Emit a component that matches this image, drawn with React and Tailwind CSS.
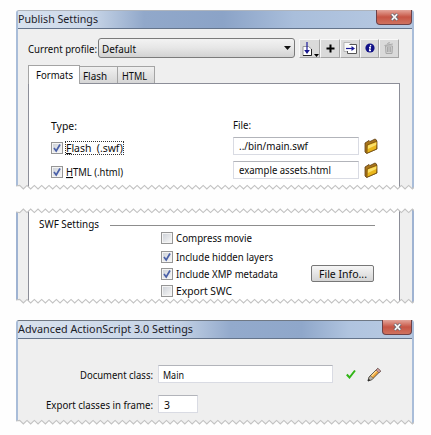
import React from "react";

const zig = (up, n = 54, p = 7.34) => {
  const pts = [];
  for (let i = 0; i <= n; i++) {
    pts.push(`${(i * p).toFixed(2)},${up ? 1 : 5}`.replace(/^0\.00,./, up ? "0,4" : "0,2"));
    pts.push(`${((i + 0.5) * p).toFixed(2)},${up ? 4.6 : 1.4}`);
  }
  return pts.join(" ");
};

// Torn edge: covers the outside of the tear in white and strokes the jagged line.
function Tear({ top }) {
  const pts = zig(top);
  return (
    <svg className={`absolute -left-[2px] h-[6px] w-[398px] ${top ? "top-0" : "bottom-0"}`} viewBox="0 0 398 6">
      <polygon points={top ? `0,-1 ${pts} 410,-1` : `0,7 ${pts} 410,7`} fill="#fefefe" />
      <polyline points={pts} fill="none" stroke="#c2c2c2" strokeWidth="1.1" />
    </svg>
  );
}

function T({ children, w, end, className = "" }) {
  return (
    <svg className={`block h-4 shrink-0 overflow-visible ${className}`} width={w} height="16">
      <text x={end ? w : 0} y="12" textAnchor={end ? "end" : "start"} textLength={w} lengthAdjust="spacingAndGlyphs" fill="currentColor">{children}</text>
    </svg>
  );
}

function Check({ on }) {
  return (
    <span className="flex size-3 shrink-0 items-center justify-center border border-[#969696] bg-[#f4f4f4]">
      <span className="flex size-2 items-center justify-center bg-linear-to-br from-[#cfd3d9] to-[#f5f5f5]">
        {on && (
          <svg className="size-2 overflow-visible" viewBox="0 0 8 8">
            <path d="M1 4 L3.2 7 L7 0.5" fill="none" stroke="#4a60a8" strokeWidth="1.7" />
          </svg>
        )}
      </span>
    </span>
  );
}

function Title({ children, w, btn, tint }) {
  return (
    <div className={`relative flex h-[18px] items-center rounded-t-[3px] border-b border-[#64748b] font-['Noto_Sans'] text-[11.5px] text-[#1c2028] ${tint}`}>
      <T w={w} className="-mt-[2px]">{children}</T>
      <span className={`absolute -top-px right-0 flex h-[15px] items-center justify-center rounded-b-[4px] border border-t-0 border-[#6d4147] bg-linear-to-b from-[#e3a59b] via-[#c65444] to-[#cf725f] ${btn}`}>
        <svg className="h-2 w-[9px]" viewBox="0 0 9 8">
          <path d="M1.5 1 L7.5 7 M7.5 1 L1.5 7" stroke="#62606b" strokeWidth="3.2" />
          <path d="M1.8 1.2 L7.2 6.8 M7.2 1.2 L1.8 6.8" stroke="#f6f4f4" strokeWidth="1.8" />
        </svg>
      </span>
    </div>
  );
}

function Folder() {
  return (
    <svg className="ml-[5px] h-4 w-[14px] shrink-0" viewBox="0 0 14 16">
      <path d="M1 5 L5 2.5 L6 3.5 L11 1 L12.5 2 L13 11 L2.5 15.5 L1 14 Z" fill="#a8741c" stroke="#5d3d12" strokeWidth=".8" />
      <path d="M3.2 7 L13 3.2 L12.6 11 L3 15.2 Z" fill="#eab71c" stroke="#6d4810" strokeWidth=".7" />
      <path d="M4 7.6 L12.3 4.4 L12.1 7 L3.9 11 Z" fill="#fbe06a" />
    </svg>
  );
}

function Field({ children, className }) {
  return (
    <span className={`flex h-[18px] shrink-0 items-center border border-[#d9dbe3] border-t-[#b2b4ba] bg-white ${className}`}>
      {children}
    </span>
  );
}

function Tool({ children, className = "w-[20px]" }) {
  return (
    <span className={`flex h-[19px] shrink-0 items-center justify-center border border-t-[#f8f8f8] border-r-[#a5a5a5] border-b-[#a5a5a5] border-l-[#f8f8f8] bg-[#dadada] ${className}`}>
      {children}
    </span>
  );
}

function Tools() {
  return (
    <div className="ml-[4px] flex">
      <Tool className="w-[21px]">
        <svg className="h-[17px] w-[19px]" viewBox="0 0 19 17">
          <path d="M3 6.5 H8.5 L11.5 9 V15.5 H3 Z" fill="#fff" stroke="#999" />
          <path d="M11.5 9 V15.5 H3" fill="none" stroke="#222" />
          <path d="M7 2 V12" stroke="#1c1c9c" strokeWidth="1.2" />
          <path d="M4.2 10 H9.8 L7 14 Z" fill="#16168c" />
          <path d="M14 14 H19 L16.5 17 Z" fill="#000" />
        </svg>
      </Tool>
      <Tool>
        <svg className="size-[9px]" viewBox="0 0 9 9"><path d="M4.5 .5 V8.5 M.5 4.5 H8.5" stroke="#000" strokeWidth="2" /></svg>
      </Tool>
      <Tool>
        <svg className="h-3 w-[15px]" viewBox="0 0 15 12">
          <path d="M1 .5 H7 L9 2.5 V9.5 H1 Z" fill="#f8f8f8" stroke="#aaa" strokeWidth=".8" />
          <path d="M6.5 2.5 H13.5 V11.5 H4.5 V9" fill="#fff" stroke="#555" />
          <path d="M3 6.5 H10" stroke="#1a1a98" strokeWidth="1.2" />
          <path d="M8.5 4 L12 6.5 L8.5 9 Z" fill="#1a1a98" />
        </svg>
      </Tool>
      <Tool className="w-[19px]">
        <svg className="size-[10px]" viewBox="0 0 10 10">
          <circle cx="5" cy="5" r="4.6" fill="#101087" />
          <path d="M5.8 2 L5.4 3.2 M4 4.4 H5.3 L4.6 7.6 H6" stroke="#fff" strokeWidth="1.3" fill="none" />
        </svg>
      </Tool>
      <Tool>
        <svg className="h-3 w-[10px]" viewBox="0 0 10 12">
          <path d="M1.5 4 H8.5 L8 11.5 H2 Z" fill="#d2d2d2" stroke="#a8a8a8" />
          <path d="M.5 3.5 L8.8 2 M3.5 2.2 L4 1 L6 .8 M3.5 5 V10 M5 5 V10 M6.6 5 V10" fill="none" stroke="#a8a8a8" />
        </svg>
      </Tool>
    </div>
  );
}

function Option({ on, children, w }) {
  return (
    <div className="flex h-full items-center gap-[3px]">
      <Check on={on} />
      <T w={w}>{children}</T>
    </div>
  );
}

export default function App() {
  return (
    <div className="h-[435px] w-[431px] overflow-hidden bg-[#fefefe] pt-[10px] pl-4 font-['Noto_Sans','DejaVu_Sans',sans-serif] text-[11px] text-[#0c0c0c]">
      <section className="relative h-[180px] w-[398px] rounded-t-[3px] border-x-2 border-t border-x-[#a9bdd9] border-t-[#aeb4bc] bg-[#efefef]">
        <Title w={80} btn="w-[36px]" tint="bg-[linear-gradient(90deg,#d8e2ee_0%,#cbd8e9_18%,#91a8ca_32%,#8ba3c7_52%,#a9bedb_70%,#b8cae2_100%)]">Publish Settings</Title>
        <div className="flex items-center pt-[9px] pl-[10px]">
          <T w={69} end className="mt-px">Current profile:</T>
          <div className="ml-px flex h-5 w-[197px] items-center justify-between rounded-[3px] border border-[#7b7b7b] bg-linear-to-b from-[#f3f3f3] via-[#e6e6e6] to-[#d2d2d2] pr-[3px] pl-[3px]">
            <T w={34} className="mt-px">Default</T>
            <svg className="h-1 w-[7px]" viewBox="0 0 7 4"><path d="M0 0 H7 L3.5 4 Z" fill="#111" /></svg>
          </div>
          <Tools />
        </div>
        <div className="mt-[7px] flex h-[18px] items-end pl-[10px]">
          <div className="relative z-10 -mb-px flex h-[19px] w-[52px] items-center justify-center border border-b-0 border-[#a4a4a4] bg-white"><T w={37}>Formats</T></div>
          <div className="flex h-[17px] w-[38px] items-center border border-b-0 border-l-0 border-[#a4a4a4] bg-linear-to-b from-[#f0f0f0] to-[#d6d6d6] pl-[3px]"><T w={24} className="mt-px">Flash</T></div>
          <div className="flex h-[17px] w-[37px] items-center border border-b-0 border-l-0 border-[#a4a4a4] bg-linear-to-b from-[#f0f0f0] to-[#d6d6d6] pl-[4px]"><T w={25} className="mt-px">HTML</T></div>
        </div>
        <div className="ml-[10px] flex h-[106px] w-[372px] border border-b-0 border-[#8c8e98] bg-white pt-[33px] pl-[22px]">
          <div className="w-[182px]">
            <T w={26} className="mt-px">Type:</T>
            <div className="mt-[5px] flex h-[18px] items-center">
              <Check on />
              <span className="ml-[2px] flex h-[14px] w-[59px] items-center border border-dotted border-[#333]"><T w={57}><tspan textDecoration="underline">F</tspan>lash&nbsp; (.swf)</T></span>
            </div>
            <div className="mt-[6px] flex h-[18px] items-center">
              <Check on />
              <T w={57} className="ml-[3px]"><tspan textDecoration="underline">H</tspan>TML (.html)</T>
            </div>
          </div>
          <div>
            <T w={18}>File:</T>
            <div className="mt-[4px] flex items-center"><Field className="w-[126px] pl-[5px]"><T w={69}>../bin/main.swf</T></Field><Folder /></div>
            <div className="mt-[6px] flex items-center"><Field className="w-[126px] pl-[5px]"><T w={92}>example assets.html</T></Field><Folder /></div>
          </div>
        </div>
        <Tear />
      </section>

      <section className="relative mt-[18px] h-[96px] w-[398px] border-x-2 border-[#9fb3d2] bg-[#efefef] pl-[10px]">
        <div className="h-full w-[372px] border-x border-[#8c8e98] bg-white pt-[8px] pl-[10px]">
          <div className="flex items-center">
            <T w={60}>SWF Settings</T>
            <div className="mt-[2px] ml-[11px] h-px w-[265px] bg-[#8d8d8d]" />
          </div>
          <div className="-mt-[4px] grid h-[71px] grid-cols-[150px_1fr] grid-rows-[20px_17px_17px_17px] items-center pl-[122px]">
            <Option w={76}>Compress movie</Option><span />
            <Option on w={97}>Include hidden layers</Option><span />
            <Option on w={102}>Include XMP metadata</Option>
            <button className="flex h-[17px] w-[63px] items-center justify-center rounded-[2px] border border-[#777] bg-linear-to-b from-[#f6f6f6] to-[#d4d4d4]"><T w={48}>File Info...</T></button>
            <Option w={56}>Export SWC</Option><span />
          </div>
        </div>
        <Tear top />
        <Tear />
      </section>

      <section className="relative mt-[16px] h-[105px] w-[398px] rounded-t-[3px] border-x-2 border-t border-x-[#a9bdd9] border-t-[#6f7884] bg-[#efefef]">
        <Title w={175} btn="w-[30px]" tint="bg-[linear-gradient(90deg,#d8e2ee_0%,#c6d4e7_40%,#93aacc_54%,#8fa7ca_72%,#b0c4df_84%,#b8cae2_100%)]">Advanced ActionScript 3.0 Settings</Title>
        <div className="flex items-center pt-[26px] pl-[62px]">
          <T w={73} end className="mt-px">Document class:</T>
          <Field className="ml-[5px] w-[175px] pl-[4px]"><T w={21} className="mt-px">Main</T></Field>
          <svg className="ml-[13px] h-[10px] w-[10px]" viewBox="0 0 10 10"><path d="M.8 5.5 L3.5 8.5 L9 1.5" fill="none" stroke="#31b516" strokeWidth="2" /></svg>
          <svg className="ml-[11px] h-[15px] w-[15px]" viewBox="0 0 15 15">
            <path d="M1 14 L2 10 L10.5 1.5 L13.5 4 L5 12.5 Z" fill="#f0a63c" stroke="#444" strokeWidth=".9" />
            <path d="M2 10.3 L3.6 8.8 L6.2 11.4 L5 12.5 L1 14 Z" fill="#bbb4a8" stroke="#444" strokeWidth=".5" />
            <path d="M4.5 9 L10 3.4" stroke="#ffdf9a" strokeWidth="1.2" />
            <path d="M9 3 L10.8 1.2 L13.8 4 L12 6 Z" fill="#cf9c9a" stroke="#645050" strokeWidth=".6" />
            <path d="M1 14 L1.7 11.7 L3.3 13.2 Z" fill="#111" />
          </svg>
        </div>
        <div className="mt-[12px] flex items-center pl-[28px]">
          <T w={107} end className="mt-px">Export classes in frame:</T>
          <Field className="ml-[5px] w-[40px] pl-[5px]"><T w={6} className="mt-px">3</T></Field>
        </div>
        <Tear />
      </section>
    </div>
  );
}
